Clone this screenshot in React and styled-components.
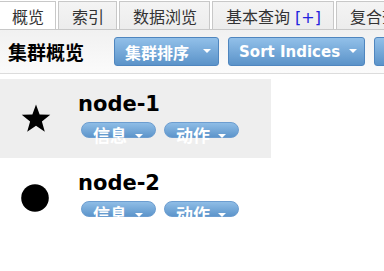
import React from "react";
import styled, { createGlobalStyle } from "styled-components";

const Global = createGlobalStyle`
  html, body { margin: 0; padding: 0; background: #fff; overflow: hidden; }
  body { font-family: "DejaVu Sans", "Noto Sans CJK SC", sans-serif; width: 384px; height: 271px; }
`;

const TabBar = styled.div`
  display: flex;
  flex-wrap: nowrap;
  overflow: hidden;
  height: 28px;
  padding-top: 1px;
  border-bottom: 1px solid #c8c8c8;
`;

const Tab = styled.div`
  flex-shrink: 0;
  box-sizing: border-box;
  height: 29px;
  margin-right: 2px;
  padding: 0 ${(p) => (p.$active ? "11px" : "12px")} 0 ${(p) => (p.$active ? "12px" : "13px")};
  border: 1px solid #c8c8c8;
  border-left: ${(p) => (p.$active ? "none" : "1px solid #c8c8c8")};
  border-bottom: none;
  background: ${(p) => (p.$active ? "#fff" : "linear-gradient(#f4f4f4, #ececec)")};
  font-size: 16px;
  line-height: 31px;
  color: #333;
  white-space: nowrap;
`;

const Plus = styled.span`
  color: #2222dd;
  margin-left: 5px;
`;

const Toolbar = styled.div`
  display: flex;
  align-items: center;
  flex-wrap: nowrap;
  overflow: hidden;
  height: 43px;
  padding-left: 8px;
  border-bottom: 1px solid #dcdcdc;
  background: linear-gradient(#f1f1f1, #fbfbfb);
  gap: 9px;
`;

const Title = styled.div`
  flex-shrink: 0;
  font-size: 19px;
  font-weight: bold;
  color: #000;
  margin-right: 21px;
  white-space: nowrap;
`;

const Caret = styled.span`
  display: inline-block;
  width: 0;
  height: 0;
  border-left: 4px solid transparent;
  border-right: 4px solid transparent;
  border-top: 4px solid #fff;
  margin-left: ${(p) => p.$gap || 8}px;
  vertical-align: middle;
  position: relative;
  top: -1px;
`;

const Button = styled.div`
  flex-shrink: 0;
  box-sizing: border-box;
  height: 29px;
  padding: 0 7px 0 10px;
  display: flex;
  align-items: center;
  border: 1px solid #4f86bf;
  border-radius: 3px;
  background: linear-gradient(#92c0e9, #5b93c9);
  color: #fff;
  font-size: ${(p) => (p.$cjk ? "16px" : "15px")};
  font-weight: bold;
  white-space: nowrap;
`;

const NodeList = styled.div`
  padding-top: 5px;
`;

const NodeRow = styled.div`
  display: flex;
  width: 271px;
  height: 79px;
  background: ${(p) => (p.$shaded ? "#eeeeee" : "transparent")};
`;

const IconCell = styled.div`
  width: 72px;
  display: flex;
  align-items: center;
  justify-content: center;
  flex-shrink: 0;
`;

const Content = styled.div`
  padding: 13px 0 0 6px;
`;

const NodeName = styled.div`
  font-size: 21px;
  font-weight: bold;
  line-height: 25px;
  color: #000;
`;

const Pills = styled.div`
  display: flex;
  gap: 8px;
  margin: 5px 0 0 3px;
`;

const Pill = styled.div`
  box-sizing: border-box;
  width: 75px;
  height: 16px;
  padding: 5px 0 0 11px;
  border: 1px solid #6c9dd0;
  border-radius: 8px;
  background: linear-gradient(#8fbde6, #5d95cb);
  color: #fff;
  font-size: 17px;
  font-weight: bold;
  line-height: 17px;
  white-space: nowrap;
`;

const Star = () => (
  <svg width="32" height="30" viewBox="-16 -15.5 32 30">
    <polygon
      fill="#000"
      points={Array.from({ length: 10 }, (_, i) => {
        const r = i % 2 === 0 ? 15 : 6.2;
        const a = (-90 + i * 36) * (Math.PI / 180);
        return `${(r * Math.cos(a)).toFixed(2)},${(r * Math.sin(a)).toFixed(2)}`;
      }).join(" ")}
    />
  </svg>
);

const Dot = () => (
  <svg width="28" height="28" viewBox="0 0 28 28" style={{ marginLeft: -3 }}>
    <circle cx="14" cy="14" r="13.8" fill="#000" />
  </svg>
);

const nodes = [
  { name: "node-1", master: true },
  { name: "node-2", master: false },
];

export default function App() {
  return (
    <>
      <Global />
      <TabBar>
        <Tab $active>概览</Tab>
        <Tab>索引</Tab>
        <Tab>数据浏览</Tab>
        <Tab>
          基本查询<Plus>[+]</Plus>
        </Tab>
        <Tab>复合查询</Tab>
      </TabBar>
      <Toolbar>
        <Title>集群概览</Title>
        <Button $cjk>
          集群排序<Caret $gap={14} />
        </Button>
        <Button>
          Sort Indices<Caret $gap={9} />
        </Button>
        <Button>
          View Aliases<Caret />
        </Button>
      </Toolbar>
      <NodeList>
        {nodes.map((n, i) => (
          <NodeRow key={n.name} $shaded={i === 0}>
            <IconCell>{n.master ? <Star /> : <Dot />}</IconCell>
            <Content>
              <NodeName>{n.name}</NodeName>
              <Pills>
                <Pill>
                  信息<Caret $gap={8} />
                </Pill>
                <Pill>
                  动作<Caret $gap={8} />
                </Pill>
              </Pills>
            </Content>
          </NodeRow>
        ))}
      </NodeList>
    </>
  );
}
